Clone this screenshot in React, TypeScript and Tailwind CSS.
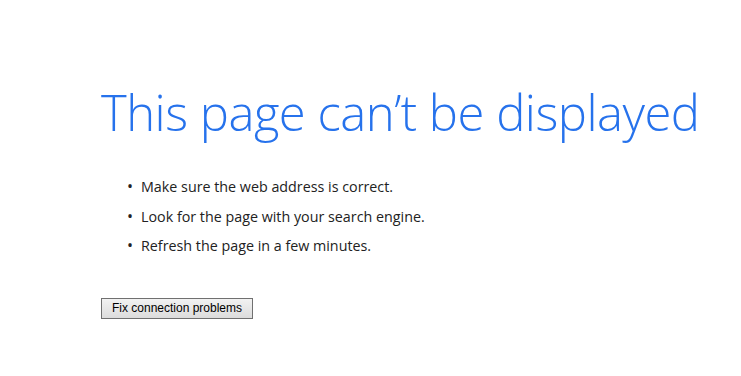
export default function App() {
  return (
    <div className="w-[741px] h-[376px] bg-white overflow-hidden">
      <div className="pl-[101px] pt-[81px]">
        <h1 className="text-[49px] leading-[62px] font-light text-[#2672ec] tracking-[-0.5px] font-['Open_Sans',sans-serif]">
          This page can’t be displayed
        </h1>
        <ul className="mt-[34px] ml-[26px] flex flex-col gap-[10px] text-[14.3px] leading-[19.5px] text-[#222] font-['Open_Sans',sans-serif]">
          <li className="flex items-center gap-[8px]">
            <span className="text-[16px]">•</span>
            <span>Make sure the web address is correct.</span>
          </li>
          <li className="flex items-center gap-[8px]">
            <span className="text-[16px]">•</span>
            <span>Look for the page with your search engine.</span>
          </li>
          <li className="flex items-center gap-[8px]">
            <span className="text-[16px]">•</span>
            <span>Refresh the page in a few minutes.</span>
          </li>
        </ul>
        <button className="mt-[42px] w-[152px] h-[21px] bg-gradient-to-b from-[#f2f2f2] to-[#dcdcdc] border border-[#707070] text-[12px] leading-[19px] text-black font-['Liberation_Sans',Arial,sans-serif]">
          Fix connection problems
        </button>
      </div>
    </div>
  );
}
